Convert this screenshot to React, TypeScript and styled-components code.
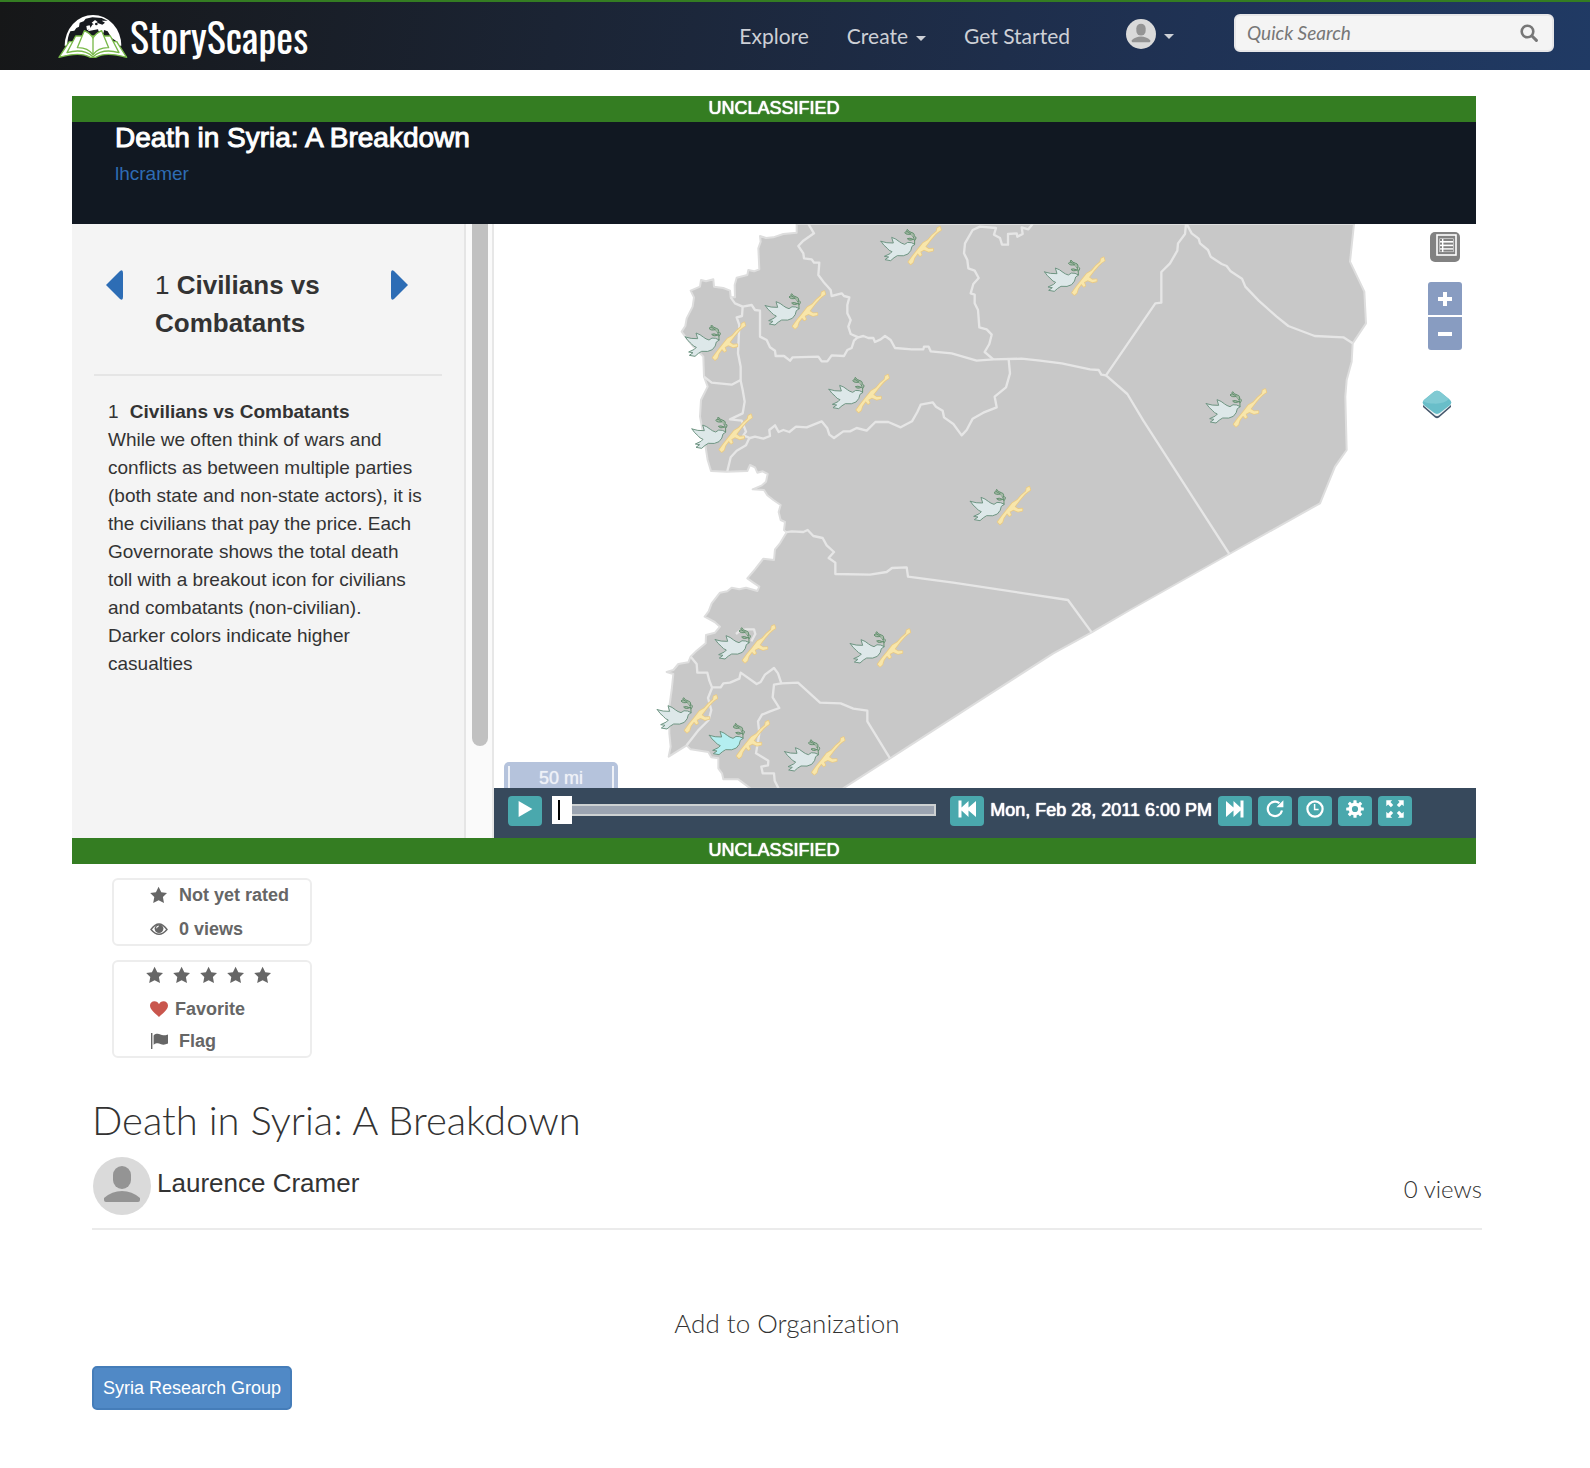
import React from "react";
import styled, { createGlobalStyle, css } from "styled-components";

const sans = '"Liberation Sans", Arial, sans-serif';
const lato = 'Lato, "Open Sans", sans-serif';

const GlobalStyle = createGlobalStyle`
  *, *::before, *::after { box-sizing: border-box; }
  body {
    margin: 0;
    background: #fff;
    color: #333;
    font-family: ${sans};
    font-size: 18px;
  }
  h1, h2, h3, p { margin: 0; font-weight: 400; }
  button { border: 0; padding: 0; background: none; color: inherit; font: inherit; cursor: pointer; }
  a { text-decoration: none; color: inherit; }
  svg { display: block; flex: none; }
`;

/* ---------- top bar ---------- */

const TopBar = styled.header`
  display: flex;
  align-items: center;
  justify-content: space-between;
  height: 70px;
  padding: 0 36px 0 57px;
  border-top: 2px solid #347d22;
  background: linear-gradient(100deg, #161718 0%, #1b2434 35%, #1f3152 72%, #203a64 100%);
`;

const Brand = styled.a`
  display: flex;
  align-items: center;
  gap: 1px;
  color: #fff;
  font-family: Oswald, "Liberation Sans Narrow", "Roboto Condensed", "Open Sans Condensed", "Liberation Sans", sans-serif;
  font-size: 40px;
  line-height: 48px;
`;

const Nav = styled.nav`
  display: flex;
  align-items: center;
  gap: 38px;
  color: #cdd0d6;
  font-family: ${lato};
  font-size: 21px;
  line-height: 24px;
`;

const MenuButton = styled.button`
  display: flex;
  align-items: center;
  gap: 8px;
`;

const UserButton = styled(MenuButton)`
  margin: 0 22px 4px 18px;
`;

const Caret = styled.span`
  margin-top: 4px;
  border: 5px solid transparent;
  border-top-color: currentColor;
  border-bottom: 0;
`;

const SearchBox = styled.form`
  display: flex;
  align-items: center;
  width: 320px;
  height: 38px;
  margin-bottom: 6px;
  padding: 0 14px 0 11px;
  border: 2px solid #e6e6e8;
  border-radius: 6px;
  background: #f4f4f4;
  color: #777;
`;

const SearchInput = styled.input`
  flex: 1;
  min-width: 0;
  padding: 0;
  border: 0;
  outline: 0;
  background: none;
  font: italic 19px/24px ${lato};
  color: #555;
  &::placeholder { color: #777; opacity: 1; }
`;

/* ---------- story viewer ---------- */

const Story = styled.section`
  margin: 26px 114px 0 72px;
`;

const Banner = styled.div`
  height: 26px;
  background: #347d22;
  color: #fff;
  font-size: 18px;
  line-height: 24px;
  text-align: center;
  text-shadow: 0 0 1px #fff, 0 0 1px #fff;
`;

const StoryHead = styled.div`
  padding: 0 43px 36px;
  background: #111822;
`;

const StoryTitle = styled.h2`
  color: #fff;
  font-size: 28px;
  line-height: 32px;
  -webkit-text-stroke: 1px #fff;
`;

const StoryAuthor = styled.a`
  display: block;
  width: max-content;
  margin-top: 6px;
  color: #2e6cb4;
  font-size: 19px;
  line-height: 28px;
`;

const StoryBody = styled.div`
  display: flex;
`;

const Chapter = styled.aside`
  flex: none;
  width: 394px;
  padding: 42px 22px 0;
  border-right: 2px solid #e5e5e5;
  background: #f4f4f4;
`;

const ChapterHead = styled.div`
  display: flex;
  align-items: flex-start;
  gap: 32px;
  padding: 0 34px 32px 12px;
  border-bottom: 2px solid #e5e5e5;
`;

const ChapterTitle = styled.h3`
  flex: 1;
  font-size: 26px;
  line-height: 38px;
`;

const ArrowButton = styled.button`
  margin-top: 4px;
`;

const ChapterText = styled.p`
  padding: 22px 18px 0 14px;
  font-size: 19px;
  line-height: 28px;
`;

const ChapterLabel = styled.strong`
  margin-left: 6px;
`;

const ScrollTrack = styled.div`
  flex: none;
  width: 28px;
  padding: 0 4px 0 6px;
  border-right: 2px solid #e7e7e7;
  background: #fafafa;
`;

const ScrollThumb = styled.div`
  width: 16px;
  height: 522px;
  border-radius: 0 0 8px 8px;
  background: #c1c1c1;
`;

const MapColumn = styled.div`
  flex: 1;
  min-width: 0;
`;

const MapArea = styled.div`
  position: relative;
  height: 564px;
  overflow: hidden;
  background: #fff;
  & > svg { width: 100%; height: 100%; }
`;

const MapTools = styled.div`
  position: absolute;
  top: 8px;
  right: 14px;
  display: flex;
  flex-direction: column;
  align-items: flex-end;
`;

const LegendButton = styled.button`
  display: flex;
  width: 30px;
  height: 30px;
  margin-right: 2px;
  padding: 2px 0 0 6px;
  border-radius: 5px;
  background: #828282;
`;

const ZoomGroup = styled.div`
  display: flex;
  flex-direction: column;
  gap: 2px;
  margin: 20px 0 40px;
`;

const ZoomButton = styled.button`
  display: flex;
  align-items: center;
  justify-content: center;
  width: 34px;
  height: 33px;
  background: #889cc1;
  &:first-child { border-radius: 3px 3px 0 0; }
  &:last-child { border-radius: 0 0 3px 3px; }
`;

const LayersButton = styled.button`
  margin-right: 10px;
`;

const ScaleBar = styled.div`
  position: absolute;
  left: 10px;
  bottom: 0;
  width: 114px;
  padding: 4px 4px 0;
  border-radius: 5px 5px 0 0;
  background: #b5c3dc;
`;

const ScaleLabel = styled.div`
  height: 22px;
  border: solid #eef1f7;
  border-width: 0 2px;
  color: #eef1f7;
  font-size: 18px;
  line-height: 24px;
  text-align: center;
  text-shadow: 0 0 1px #eef1f7;
`;

const Playback = styled.div`
  display: flex;
  align-items: center;
  gap: 6px;
  height: 50px;
  padding: 0 64px 4px 14px;
  background: #37495c;
  color: #fff;
`;

const ToolButton = styled.button`
  display: flex;
  align-items: center;
  justify-content: center;
  width: 34px;
  height: 30px;
  padding-bottom: 4px;
  border-radius: 4px;
  background: #4aa8ad;
`;

const Moment = styled.time`
  padding-bottom: 2px;
  font-size: 18px;
  line-height: 24px;
  white-space: nowrap;
  text-shadow: 0 0 1px #fff, 0 0 1px #fff;
`;

const track = css`
  height: 12px;
  border: 2px solid #cdd1d2;
  background: #9ba4b1;
`;

const thumb = css`
  width: 20px;
  height: 28px;
  border: 0;
  border-radius: 0;
  background: linear-gradient(#000, #000) 6px 4px / 2px 20px no-repeat #fff;
`;

const Timeline = styled.input`
  appearance: none;
  flex: 1;
  min-width: 0;
  height: 28px;
  margin: 0 8px 2px 4px;
  background: none;
  &::-webkit-slider-runnable-track { ${track} }
  &::-webkit-slider-thumb { appearance: none; margin-top: -10px; margin-left: -2px; ${thumb} }
  &::-moz-range-track { ${track} }
  &::-moz-range-thumb { ${thumb} }
`;

/* ---------- ratings ---------- */

const Ratings = styled.section`
  display: flex;
  flex-direction: column;
  gap: 14px;
  width: 200px;
  margin: 14px 0 0 112px;
  color: #666;
  font-weight: 700;
`;

const RatingBox = styled.div<{ $gap: number }>`
  display: flex;
  flex-direction: column;
  gap: ${(p) => p.$gap}px;
  padding-left: 36px;
  border: 2px solid #ededed;
  border-radius: 6px;
`;

const RatingRow = styled.div<{ $gap?: number }>`
  display: flex;
  align-items: center;
  gap: ${(p) => p.$gap ?? 11}px;
  line-height: 30px;
`;

const StarRow = styled.div`
  display: flex;
  align-items: center;
  gap: 9px;
  height: 30px;
  margin-left: -4px;
  padding-bottom: 4px;
`;

const RatingAction = styled(RatingRow).attrs({ as: "button", type: "button" })`
  width: max-content;
`;

/* ---------- details ---------- */

const Details = styled.section`
  margin: 38px 108px 58px 92px;
  font-family: ${lato};
  font-weight: 300;
  font-variant-ligatures: none;
`;

const PageTitle = styled.h1`
  font-size: 40px;
  font-weight: 300;
  line-height: 48px;
`;

const AuthorRow = styled.div`
  display: flex;
  align-items: flex-start;
  gap: 6px;
  padding: 13px 0 13px 1px;
  border-bottom: 2px solid #ebebeb;
`;

const AuthorName = styled.a`
  flex: 1;
  padding-top: 10px;
  font: 400 26px/32px ${sans};
`;

const ViewCount = styled.span`
  padding-top: 16px;
  font-size: 24px;
  line-height: 32px;
`;

const SectionTitle = styled.h3`
  margin: 77px 0 27px;
  font-size: 26px;
  font-weight: 300;
  line-height: 32px;
  text-align: center;
`;

const GroupButton = styled.button`
  height: 44px;
  padding: 0 9px;
  border: 2px solid #457db9;
  border-radius: 5px;
  background: #5089c6;
  color: #fff;
  font: 400 18px/24px ${sans};
`;

/* ---------- drawings ---------- */

const LogoMark = () => (
  <svg width="72" height="48" viewBox="170 34 216 144" aria-hidden="true">
    <path d="M193 135 A85 92 0 0 1 363 135 Z" fill="#fff" />
    <path
      d="M201 134 C201 116 204 104 210 92 L222 90 L228 82 L236 78 L238 66 L250 62 L256 54 L276 50 L304 52 L322 60 L304 60 L314 66 L306 72 L290 66 L276 72 L270 82 L262 92 L300 84 L322 92 L334 112 L352 124 L354 136 Z"
      fill="#171a1f"
    />
    <path d="M258 76 L268 74 L272 86 L260 88 Z M274 66 L284 58 L292 64 L284 74 Z M292 78 L312 80 L310 96 L294 90 Z" fill="#fff" />
    <circle cx="288" cy="70" r="4" fill="#171a1f" />
    <g fill="#fff" stroke="#79b94a" strokeWidth="4" strokeLinejoin="round">
      <path d="M207 123 L176 170 Q240 152 270 170 L286 170 Q316 152 379 170 L349 123 Z" />
      <path d="M226 106 L200 156 Q248 142 278 168 Q308 142 356 156 L330 106 Z" />
      <path d="M252 90 L231 141 Q262 140 278 162 Q294 140 325 141 L304 90 Q286 98 278 112 Q270 98 252 90 Z" />
      <path d="M278 112 V162" />
    </g>
  </svg>
);

const Avatar = ({ size }: { size: number }) => (
  <svg width={size} height={size} viewBox="0 0 58 58" aria-hidden="true">
    <circle cx="29" cy="29" r="29" fill="#dadada" />
    <rect x="20" y="9" width="18" height="23" rx="9" fill="#949494" />
    <path d="M11 45 V41 Q19 34 29 34 Q39 34 47 41 V43 Q47 45 45 45 H13 Q11 45 11 43 Z" fill="#949494" />
  </svg>
);

const SearchGlyph = () => (
  <svg width="18" height="18" viewBox="0 0 18 18" fill="none" stroke="#777" aria-hidden="true">
    <circle cx="7.5" cy="7.5" r="5.8" strokeWidth="2.6" />
    <path d="M12 12 L16.4 16.4" strokeWidth="3" strokeLinecap="round" />
  </svg>
);

const Triangle = ({ left }: { left?: boolean }) => (
  <svg width="17" height="30" viewBox="0 0 17 30" aria-hidden="true">
    <path
      d={left ? "M0 15 L14 1 Q17 -1 17 3 V27 Q17 31 14 29 Z" : "M17 15 L3 1 Q0 -1 0 3 V27 Q0 31 3 29 Z"}
      fill="#2d6db5"
    />
  </svg>
);

const Star = () => (
  <svg width="18" height="18" viewBox="0 0 18 18" fill="#666" aria-hidden="true">
    <path d="M8.6 0.8 L11.3 6.2 L17 7 L12.9 11 L14 17 L8.6 14.2 L3.2 17 L4.3 11 L0.2 7 L5.9 6.2 Z" />
  </svg>
);

const Eye = () => (
  <svg width="18" height="18" viewBox="0 0 18 18" aria-hidden="true">
    <path d="M1 9.5 Q9 -1.5 17 9.5 Q9 19 1 9.5 Z" fill="#fff" stroke="#666" strokeWidth="1.4" />
    <circle cx="9" cy="8.6" r="4.4" fill="#666" />
    <path d="M6.6 8.2 Q6.8 6.2 8.8 6" fill="none" stroke="#fff" strokeWidth="1.1" />
  </svg>
);

const Heart = () => (
  <svg width="18" height="16" viewBox="0 0 18 16" fill="#c9564d" aria-hidden="true">
    <path d="M9 16 C6 13 0 9 0 4.6 C0 1.8 2 0.2 4.4 0.2 C6.6 0.2 8.2 1.5 9 3.2 C9.8 1.5 11.4 0.2 13.6 0.2 C16 0.2 18 1.8 18 4.6 C18 9 12 13 9 16 Z" />
  </svg>
);

const FlagGlyph = () => (
  <svg width="18" height="16" viewBox="0 0 18 16" fill="#666" aria-hidden="true">
    <rect x="1" y="0" width="1.4" height="16" />
    <path d="M3.6 2.4 C6 0.4 8.4 0.6 10.4 1.6 C12.6 2.8 15 2.4 18 1.4 V10.6 C15 12 12.6 12 10.4 11 C8.4 10 6 10 3.6 11.8 Z" />
  </svg>
);

const glyphs: Record<string, React.ReactNode> = {
  play: <path d="M2.6 1 L16.4 9 L2.6 17 Z" />,
  back: <path d="M0.5 0.5 H3.5 V7.5 L10.5 1 V7.5 L18 1 V17 L10.5 10.5 V17 L3.5 10.5 V17.5 H0.5 Z" />,
  forward: <path d="M17.5 0.5 H14.5 V7.5 L7.5 1 V7.5 L0 1 V17 L7.5 10.5 V17 L14.5 10.5 V17.5 H17.5 Z" />,
  repeat: (
    <>
      <path d="M16 10.5 A7.2 7.2 0 1 1 13.4 3.2" fill="none" stroke="#fff" strokeWidth="2.2" />
      <path d="M17.4 0.2 V7.2 H10.4 Z" />
    </>
  ),
  clock: (
    <g fill="none" stroke="#fff">
      <circle cx="9" cy="9" r="7.6" strokeWidth="2.2" />
      <path d="M8.6 4 V9.4 H12.6" strokeWidth="1.5" />
    </g>
  ),
  cog: (
    <>
      <circle cx="9" cy="9" r="4.8" fill="none" stroke="#fff" strokeWidth="3.4" />
      {[0, 45, 90, 135, 180, 225, 270, 315].map((a) => (
        <rect key={a} x="7.4" y="0.2" width="3.2" height="4" rx="0.6" transform={`rotate(${a} 9 9)`} />
      ))}
    </>
  ),
  full: (
    <>
      {[0, 90, 180, 270].map((a) => (
        <path key={a} d="M0.3 0.3 H6.2 L4.4 2.1 L7.2 4.9 L4.9 7.2 L2.1 4.4 L0.3 6.2 Z" transform={`rotate(${a} 9 9)`} />
      ))}
    </>
  ),
};

const Tool = ({ name, label }: { name: string; label: string }) => (
  <ToolButton type="button" aria-label={label}>
    <svg width="18" height="18" viewBox="0 0 18 18" fill="#fff" aria-hidden="true">
      {glyphs[name]}
    </svg>
  </ToolButton>
);

const LegendGlyph = () => (
  <svg width="21" height="22" viewBox="0 0 21 22" aria-hidden="true">
    <rect x="1" y="1" width="19" height="20" fill="#828282" stroke="#fff" strokeWidth="1.6" />
    <rect x="3" y="4" width="15" height="14.6" fill="#fff" />
    <g fill="#828282">
      {[5, 8.6, 12.2, 15.6].map((y) => (
        <React.Fragment key={y}>
          <rect x="4" y={y} width="2" height="2" />
          <rect x="7.4" y={y} width="9.6" height="2" />
        </React.Fragment>
      ))}
    </g>
    <rect x="3" y="4" width="15" height="14.6" fill="none" stroke="#828282" />
  </svg>
);

const LayersGlyph = () => (
  <svg width="30" height="30" viewBox="0 0 30 30" aria-hidden="true">
    <path d="M1 17 L13 27.5 Q15 29 17 27.5 L29 17 L29 15 H1 Z" fill="#44566b" />
    <path d="M1 15 L13 25.5 Q15 27 17 25.5 L29 15 V13 H1 Z" fill="#eef4f5" />
    <path d="M11.6 2 Q15 -0.6 18.4 2 L27.6 9.4 Q31 12.4 27.6 15.4 L18.4 22.6 Q15 25.2 11.6 22.6 L2.4 15.4 Q-1 12.4 2.4 9.4 Z" fill="#69bec9" />
    <path d="M11.6 2 Q15 -0.6 18.4 2 L27 9 Q22 14 12 13.6 Q5 13.4 1 11.2 Z" fill="#80cad3" />
  </svg>
);

/* Map units are thirds of a screen pixel. */
const land =
  "M470 42 L470 68 L430 72 L400 82 L378 84 L360 78 L362 95 L355 115 L358 178 L342 184 L325 180 L322 195 L290 203 L284 225 L285 262 L272 262 L270 242 L250 234 L222 230 L220 208 L198 214 L183 210 L180 230 L152 242 L162 262 L158 290 L140 325 L136 348 L125 365 L140 385 L160 410 L190 440 L192 500 L203 530 L183 570 L180 620 L195 700 L203 750 L213 783 L260 785 L322 783 L330 765 L345 772 L352 788 L368 784 L383 792 L378 815 L366 826 L338 838 L372 840 L382 856 L400 870 L422 885 L416 906 L422 930 L435 936 L432 960 L440 967 L420 1000 L405 1018 L402 1050 L370 1046 L345 1078 L322 1105 L340 1118 L358 1130 L352 1143 L318 1133 L298 1138 L275 1133 L262 1144 L240 1148 L215 1180 L206 1204 L194 1220 L224 1236 L240 1250 L225 1268 L198 1275 L197 1300 L170 1322 L152 1340 L145 1357 L115 1362 L100 1380 L80 1386 L100 1392 L95 1440 L88 1490 L88 1570 L92 1610 L86 1640 L140 1606 L152 1618 L205 1626 L214 1642 L235 1645 L235 1675 L246 1690 L250 1708 L295 1708 L332 1736 L608 1736 L750 1645 L1000 1484 L1240 1330 L1355 1267 L1470 1200 L1768 1032 L2040 880 L2085 770 L2120 720 L2116 560 L2120 510 L2135 455 L2138 400 L2178 340 L2173 245 L2130 155 L2142 42 Z";

const borders = [
  "M505 42 L522 70 L490 92 L475 108 L490 130 L492 145 L515 148 L522 158 L538 158 L535 195 L550 215 L572 240 L575 258 L605 250 L612 258 L628 262 L622 285 L622 310 L632 330 L625 350 L632 372 L655 382 L670 378 L685 384 L700 384 L705 396 L722 388 L735 378 L752 390 L765 414 L815 418 L850 418 L852 410 L866 410 L872 424 L935 430 L1010 452 L1060 448 L1145 446 L1200 452 L1265 460 L1350 478 L1376 480 L1384 494 L1398 496",
  "M272 262 L285 280 L308 290 L335 285 L345 300 L360 302 L360 380 L380 390 L390 412 L405 422 L407 438 L432 438 L450 452 L458 442 L535 440 L545 454 L562 454 L575 436 L612 438 L622 420 L635 414 L642 392 L655 380",
  "M308 290 L306 318 L290 322 L298 345 L294 430 L302 470 L302 512 L308 540 L314 575 L308 610 L270 628 L305 632 L318 665 L310 676 L330 684 L345 680 L370 686 L390 678 L388 660 L405 646 L416 666 L430 660 L448 666 L468 650 L500 652 L545 634 L562 655 L568 674 L582 684 L610 664 L630 664 L650 654 L680 662 L706 636 L745 636 L782 652 L816 634 L832 606 L842 584 L878 577 L888 590 L908 602 L912 622 L940 642 L965 676 L980 660 L998 626 L1030 608 L1070 592 L1064 560 L1098 532 L1110 490 L1106 448",
  "M192 500 L215 518 L275 524 L302 510",
  "M328 684 L318 706 L290 722 L272 742 L262 784",
  "M1178 42 L1165 58 L1145 52 L1148 72 L1132 80 L1130 70 L1104 72 L1104 104 L1086 104 L1080 84 L1062 74 L1068 54 L1020 50 L998 60 L975 100 L972 130 L982 150 L985 175 L1004 182 L1016 204 L1000 222 L992 250 L1004 254 L1004 280 L1014 300 L1018 352 L1040 358 L1055 374 L1048 402 L1034 426 L1060 448",
  "M1638 42 L1635 72 L1614 100 L1612 122 L1590 160 L1564 186 L1564 278 L1546 280 L1398 496 L1462 552 L1510 632 L1768 1032",
  "M1640 42 L1655 70 L1676 86 L1680 100 L1704 120 L1712 140 L1745 162 L1760 168 L1772 184 L1806 206 L1816 230 L1856 272 L1910 320 L1945 348 L2024 378 L2110 382 L2138 400",
  "M435 967 L455 964 L490 966 L503 960 L520 978 L548 984 L560 1006 L582 1026 L566 1044 L586 1058 L586 1092 L690 1094 L740 1086 L756 1074 L800 1072 L804 1100 L940 1118 L1284 1170 L1355 1267",
  "M152 1340 L170 1362 L172 1388 L202 1388 L208 1412 L216 1432 L242 1432 L250 1420 L270 1418 L298 1406 L302 1388 L350 1422 L362 1416 L375 1394 L402 1374 L414 1390 L424 1420 L474 1418 L540 1478 L602 1480 L640 1496 L682 1502 L682 1534 L750 1645",
  "M424 1420 L402 1424 L398 1462 L418 1494 L390 1504 L366 1514 L354 1534 L358 1570 L348 1630 L385 1652 L384 1666 L364 1670 L368 1690 L402 1690 L404 1712 L416 1736",
  "M216 1434 L204 1464 L214 1500 L206 1530 L174 1562 L140 1606",
  "M288 1272 L300 1262 L318 1258 L342 1258 L346 1272 L334 1294",
];

const markers: Array<[number, number, boolean?]> = [
  [722, 48], [375, 241], [135, 335], [155, 611], [566, 492], [990, 828], [1213, 140],
  [1698, 535], [225, 1243], [630, 1255], [51, 1453], [207, 1530, true], [433, 1579],
];

const Marker = ({ x, y, hot }: { x: number; y: number; hot?: boolean }) => (
  <g transform={`translate(${x} ${y})`} strokeLinejoin="round" strokeLinecap="round">
    <path
      d="M1 46 Q18 52 38 51 L33 34 Q46 38 56 47 Q62 52 72 55 Q80 46 92 50 L103 55 L94 61 Q93 74 82 84 Q70 92 50 89 Q40 94 30 104 L13 101 L24 93 L11 91 L28 83 L34 77 Q24 74 20 67 Q8 58 1 46 Z"
      fill={hot ? "#b4eef0" : "#dde8e9"}
      stroke="#6f9583"
      strokeWidth="3"
    />
    <g fill="#a3b8a5" stroke="#63906f" strokeWidth="3">
      <path d="M102 54 Q104 34 90 24" fill="none" />
      <path d="M100 34 Q104 22 94 20 Q84 18 80 10 Q74 14 86 24" />
      <path d="M90 24 Q78 12 72 20 Q78 28 90 24 M98 40 Q86 34 80 38 Q86 46 98 40 M102 44 Q110 34 104 32" />
    </g>
    <path
      d="M83 108 L90 115 L97 109 L101 96 L111 82 L118 90 L123 87 L119 77 L130 71 L144 77 L157 74 L157 68 L144 69 L134 62 L150 41 L164 25 L172 18 L181 12 L178 2 L170 6 L168 16 L154 28 L142 42 L127 51 L112 70 L96 90 Z"
      fill="#f8e6aa"
      stroke="#e9ca86"
      strokeWidth="5"
      paintOrder="stroke"
    />
  </g>
);

const SyriaMap = () => (
  <svg viewBox="-438 42 2946 1692" preserveAspectRatio="xMinYMin slice" role="img" aria-label="Map of Syria by governorate">
    <path d={land} fill="#c8c8c8" stroke="#dedede" strokeWidth="6" strokeLinejoin="round" />
    <g fill="none" stroke="#e6e6e6" strokeWidth="7" strokeLinejoin="round">
      {borders.map((d) => (
        <path key={d} d={d} />
      ))}
    </g>
    {markers.map(([x, y, hot]) => (
      <Marker key={`${x}-${y}`} x={x} y={y} hot={hot} />
    ))}
  </svg>
);

/* ---------- page ---------- */

export default function App() {
  return (
    <>
      <GlobalStyle />
      <TopBar>
        <Brand href="#">
          <LogoMark />
          StoryScapes
        </Brand>
        <Nav>
          <a href="#explore">Explore</a>
          <MenuButton type="button">
            Create <Caret />
          </MenuButton>
          <a href="#start">Get Started</a>
          <UserButton type="button" aria-label="Account">
            <Avatar size={30} />
            <Caret />
          </UserButton>
          <SearchBox role="search">
            <SearchInput type="text" aria-label="Quick Search" placeholder="Quick Search" />
            <button type="submit" aria-label="Search">
              <SearchGlyph />
            </button>
          </SearchBox>
        </Nav>
      </TopBar>

      <main>
        <Story>
          <Banner>UNCLASSIFIED</Banner>
          <StoryHead>
            <StoryTitle>Death in Syria: A Breakdown</StoryTitle>
            <StoryAuthor href="#author">lhcramer</StoryAuthor>
          </StoryHead>
          <StoryBody>
            <Chapter>
              <ChapterHead>
                <ArrowButton type="button" aria-label="Previous chapter">
                  <Triangle left />
                </ArrowButton>
                <ChapterTitle>
                  1 <strong>Civilians vs</strong> <strong>Combatants</strong>
                </ChapterTitle>
                <ArrowButton type="button" aria-label="Next chapter">
                  <Triangle />
                </ArrowButton>
              </ChapterHead>
              <ChapterText>
                1 <ChapterLabel>Civilians vs Combatants</ChapterLabel>
                <br />
                While we often think of wars and conflicts as between multiple parties (both state and
                non-state actors), it is the civilians that pay the price. Each Governorate shows the
                total death toll with a breakout icon for civilians and combatants (non-civilian).
                <br />
                Darker colors indicate higher casualties
              </ChapterText>
            </Chapter>
            <ScrollTrack>
              <ScrollThumb />
            </ScrollTrack>
            <MapColumn>
              <MapArea>
                <SyriaMap />
                <MapTools>
                  <LegendButton type="button" aria-label="Legend">
                    <LegendGlyph />
                  </LegendButton>
                  <ZoomGroup>
                    <ZoomButton type="button" aria-label="Zoom in">
                      <svg width="14" height="14" viewBox="0 0 14 14" fill="#fff" aria-hidden="true">
                        <path d="M5 0 H9 V5 H14 V9 H9 V14 H5 V9 H0 V5 H5 Z" />
                      </svg>
                    </ZoomButton>
                    <ZoomButton type="button" aria-label="Zoom out">
                      <svg width="14" height="14" viewBox="0 0 14 14" fill="#fff" aria-hidden="true">
                        <path d="M0 5 H14 V9 H0 Z" />
                      </svg>
                    </ZoomButton>
                  </ZoomGroup>
                  <LayersButton type="button" aria-label="Layers">
                    <LayersGlyph />
                  </LayersButton>
                </MapTools>
                <ScaleBar>
                  <ScaleLabel>50 mi</ScaleLabel>
                </ScaleBar>
              </MapArea>
              <Playback>
                <Tool name="play" label="Play" />
                <Timeline type="range" min={0} max={100} defaultValue={0} aria-label="Timeline" />
                <Tool name="back" label="Previous" />
                <Moment dateTime="2011-02-28T18:00">Mon, Feb 28, 2011 6:00 PM</Moment>
                <Tool name="forward" label="Next" />
                <Tool name="repeat" label="Loop" />
                <Tool name="clock" label="Time settings" />
                <Tool name="cog" label="Settings" />
                <Tool name="full" label="Full screen" />
              </Playback>
            </MapColumn>
          </StoryBody>
          <Banner>UNCLASSIFIED</Banner>
        </Story>

        <Ratings>
          <RatingBox $gap={4}>
            <RatingRow>
              <Star />
              Not yet rated
            </RatingRow>
            <RatingRow>
              <Eye />0 views
            </RatingRow>
          </RatingBox>
          <RatingBox $gap={2}>
            <StarRow>
              {[1, 2, 3, 4, 5].map((n) => (
                <button key={n} type="button" aria-label={`Rate ${n}`}>
                  <Star />
                </button>
              ))}
            </StarRow>
            <RatingAction $gap={7}>
              <Heart />
              Favorite
            </RatingAction>
            <RatingAction>
              <FlagGlyph />
              Flag
            </RatingAction>
          </RatingBox>
        </Ratings>

        <Details>
          <PageTitle>Death in Syria: A Breakdown</PageTitle>
          <AuthorRow>
            <Avatar size={58} />
            <AuthorName href="#author">Laurence Cramer</AuthorName>
            <ViewCount>0 views</ViewCount>
          </AuthorRow>
          <SectionTitle>Add to Organization</SectionTitle>
          <GroupButton type="button">Syria Research Group</GroupButton>
        </Details>
      </main>
    </>
  );
}
